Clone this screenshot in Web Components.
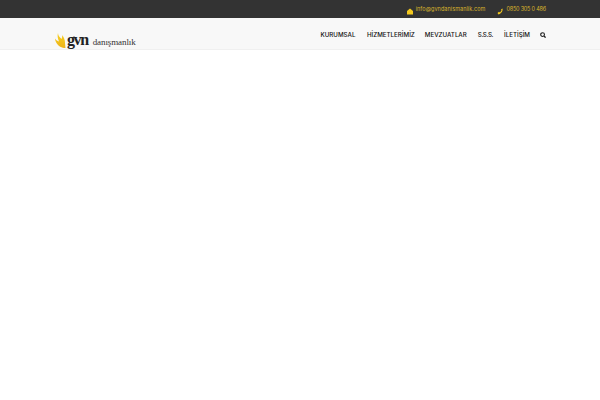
<!DOCTYPE html>
<html>
<head>
<meta charset="utf-8">
<style>
    body { margin: 0; background: #fff; font-family: Inter, "Liberation Sans", sans-serif; }
</style>
</head>
<body>
<gvn-topbar>
    <gvn-contact text="info@gvndanismanlik.com" kind="mail"></gvn-contact>
    <gvn-contact text="0850 305 0 486" kind="phone"></gvn-contact>
</gvn-topbar>
<gvn-header>
    <gvn-logo slot="logo"></gvn-logo>
    <gvn-nav-link style="margin-right: 1.500px">KURUMSAL</gvn-nav-link>
    <gvn-nav-link>HİZMETLERİMİZ</gvn-nav-link>
    <gvn-nav-link>MEVZUATLAR</gvn-nav-link>
    <gvn-nav-link style="letter-spacing: -.4px; padding: 0 1px">S.S.S.</gvn-nav-link>
    <gvn-nav-link>İLETİŞİM</gvn-nav-link>
    <gvn-search></gvn-search>
</gvn-header>
<script>
class topbar extends HTMLElement {
    constructor() {
        super();
        this.attachShadow({mode: "open"}).innerHTML = `
            <style>
                :host {
                    display: flex;
                    justify-content: flex-end;
                    align-items: center;
                    gap: 12px;
                    height: 18px;
                    padding-right: 54px;
                    background: #333;
                }
            </style>
            <slot></slot>
        `;
    }
}
customElements.define("gvn-topbar", topbar);

class contact extends HTMLElement {
    constructor() {
        super();
        const icons = {
            mail: '<path d="M0 3 3 .5 6 3V6.500H0Z" fill="#f4c91e"/>',
            phone: '<path d="M.5 5 2 3.800 3 4.500 4.500 2.500 4 1.500 5.500 .5C6 2 5 5.500 1.500 6.500Z" fill="#f4c91e"/>'
        };
        const kind = this.getAttribute("kind");
        this.attachShadow({mode: "open"}).innerHTML = `
            <style>
                :host {
                    display: flex;
                    align-items: center;
                    gap: 3px;
                    color: #d9b42c;
                    font-size: 5.500px;
                    letter-spacing: ${kind == "phone" ? "-.2px" : ".06px"};
                    line-height: 8px;
                }

                svg {
                    width: 6px;
                    height: 7px;
                    margin-top: 4px;
                }
            </style>
            <svg viewBox="0 0 6 7">${icons[kind]}</svg>
            <span>${this.getAttribute("text")}</span>
        `;
    }
}
customElements.define("gvn-contact", contact);

class header extends HTMLElement {
    constructor() {
        super();
        this.attachShadow({mode: "open"}).innerHTML = `
            <style>
                :host {
                    display: flex;
                    justify-content: space-between;
                    align-items: center;
                    height: 31px;
                    padding: 0 54px 0 55px;
                    background: #f8f8f8;
                    border-bottom: 1px solid #f0f0f0;
                }

                nav {
                    display: flex;
                    align-items: center;
                    gap: 10px;
                    margin-top: 2px;
                }
            </style>
            <slot name="logo"></slot>
            <nav><slot></slot></nav>
        `;
    }
}
customElements.define("gvn-header", header);

class logo extends HTMLElement {
    constructor() {
        super();
        this.attachShadow({mode: "open"}).innerHTML = `
            <style>
                :host {
                    display: flex;
                    align-items: baseline;
                    margin-top: 14px;
                    height: 18px;
                    color: #222;
                    font-family: "Liberation Serif", serif;
                }

                svg {
                    width: 11px;
                    height: 15px;
                    margin-right: 1px;
                    align-self: center;
                }

                b {
                    font-size: 16px;
                    letter-spacing: -1.400px;
                    line-height: 16px;
                }

                span {
                    margin-left: 5px;
                    color: #333;
                    font-size: 9px;
                    letter-spacing: -.1px;
                }
            </style>
            <svg viewBox="0 0 11 15">
                <defs>
                    <linearGradient id="flame" x1="0" y1="0" x2="0" y2="1">
                        <stop offset="0" stop-color="#f6d020"/>
                        <stop offset="1" stop-color="#eeb31a"/>
                    </linearGradient>
                </defs>
                <path d="M3 0C3 3 5 4 6.500 6 7 4.500 7.500 3.500 7 2 9 4 10 7 10 10L10.500 15C7 15 3 13 1.500 10 .5 8.500 0 7 0 5.500 1 7 2.500 8 4 8.500 3 6 2 3 3 0Z" fill="url(#flame)"/>
            </svg>
            <b>gvn</b>
            <span>danışmanlık</span>
        `;
    }
}
customElements.define("gvn-logo", logo);

class navLink extends HTMLElement {
    constructor() {
        super();
        this.attachShadow({mode: "open"}).innerHTML = `
            <style>
                :host {
                    display: block;
                    color: #111;
                    font-size: 6.200px;
                    font-weight: 500;
                }
            </style>
            <slot></slot>
        `;
    }
}
customElements.define("gvn-nav-link", navLink);

class search extends HTMLElement {
    constructor() {
        super();
        this.attachShadow({mode: "open"}).innerHTML = `
            <style>
                :host {
                    display: block;
                    width: 6px;
                    height: 6px;
                }

                svg {
                    display: block;
                }
            </style>
            <svg width="6" height="6" viewBox="0 0 7 7" fill="none" stroke="#222">
                <circle cx="3" cy="3" r="2.200" stroke-width="1.300"/>
                <path d="M4.600 4.600 6.500 6.500" stroke-width="1.600"/>
            </svg>
        `;
    }
}
customElements.define("gvn-search", search);
</script>
</body>
</html>
